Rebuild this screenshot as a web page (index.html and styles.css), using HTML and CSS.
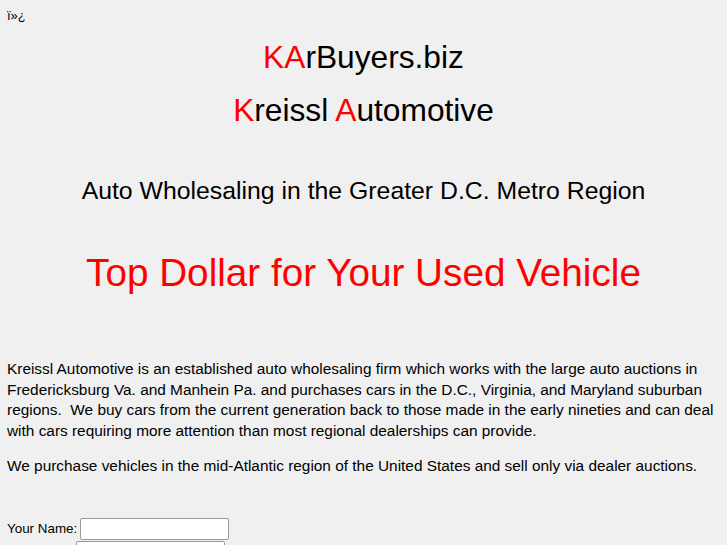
FILE: index.html
```html
<!DOCTYPE html>
<html>
<head>
<meta charset="utf-8">
<link rel="stylesheet" href="styles.css">
</head>
<body>
<div class="bom">ï»¿</div>
<div class="title"><span class="red">KA</span>rBuyers.biz</div>
<div class="title t2"><span class="red">K</span>reissl <span class="red">A</span>utomotive</div>
<div class="sub">Auto Wholesaling in the Greater D.C. Metro Region</div>
<div class="top">Top Dollar for Your Used Vehicle</div>
<p class="para first">Kreissl Automotive is an established auto wholesaling firm which works with the large auto auctions in Fredericksburg Va. and Manhein Pa. and purchases cars in the D.C., Virginia, and Maryland suburban regions.&nbsp; We buy cars from the current generation back to those made in the early nineties and can deal with cars requiring more attention than most regional dealerships can provide.</p>
<p class="para">We purchase vehicles in the mid-Atlantic region of the United States and sell only via dealer auctions.</p>
<form class="form">
<div class="row"><label class="lbl">Your Name:</label><input class="field" type="text"></div>
<div class="row r2"><span class="spacer"></span><input class="field" type="text"></div>
</form>
</body>
</html>
```
FILE: styles.css
```css
html { background: #f0f0f0; }
body {
  margin: 8px 7px;
  font-family: "Liberation Sans", Arial, sans-serif;
  color: #000;
  background: #f0f0f0;
}
.bom { font-size: 13px; line-height: 16px; }
.red { color: #ff0000; }
.title {
  text-align: center;
  font-size: 31.7px;
  line-height: 37px;
  margin-top: 15px;
}
.t2 { margin-top: 16px; }
.sub {
  text-align: center;
  font-size: 24.8px;
  line-height: 28px;
  margin-top: 48px;
}
.top {
  text-align: center;
  font-size: 38.7px;
  line-height: 44px;
  color: #ff0000;
  margin-top: 46px;
}
.para {
  font-size: 15.4px;
  line-height: 20.7px;
  margin: 0 0 14px 0;
}
.para.first { margin-top: 64px; }
.form { margin-top: 41px; font-size: 13.4px; }
.row { display: flex; align-items: center; gap: 3px; margin-bottom: 1px; }
.spacer { width: 66px; flex: none; }
.field {
  width: 145px;
  height: 18px;
  border: 1px solid #999;
  border-radius: 2px;
  background: #fff;
  padding: 1px 1px;
}
```
